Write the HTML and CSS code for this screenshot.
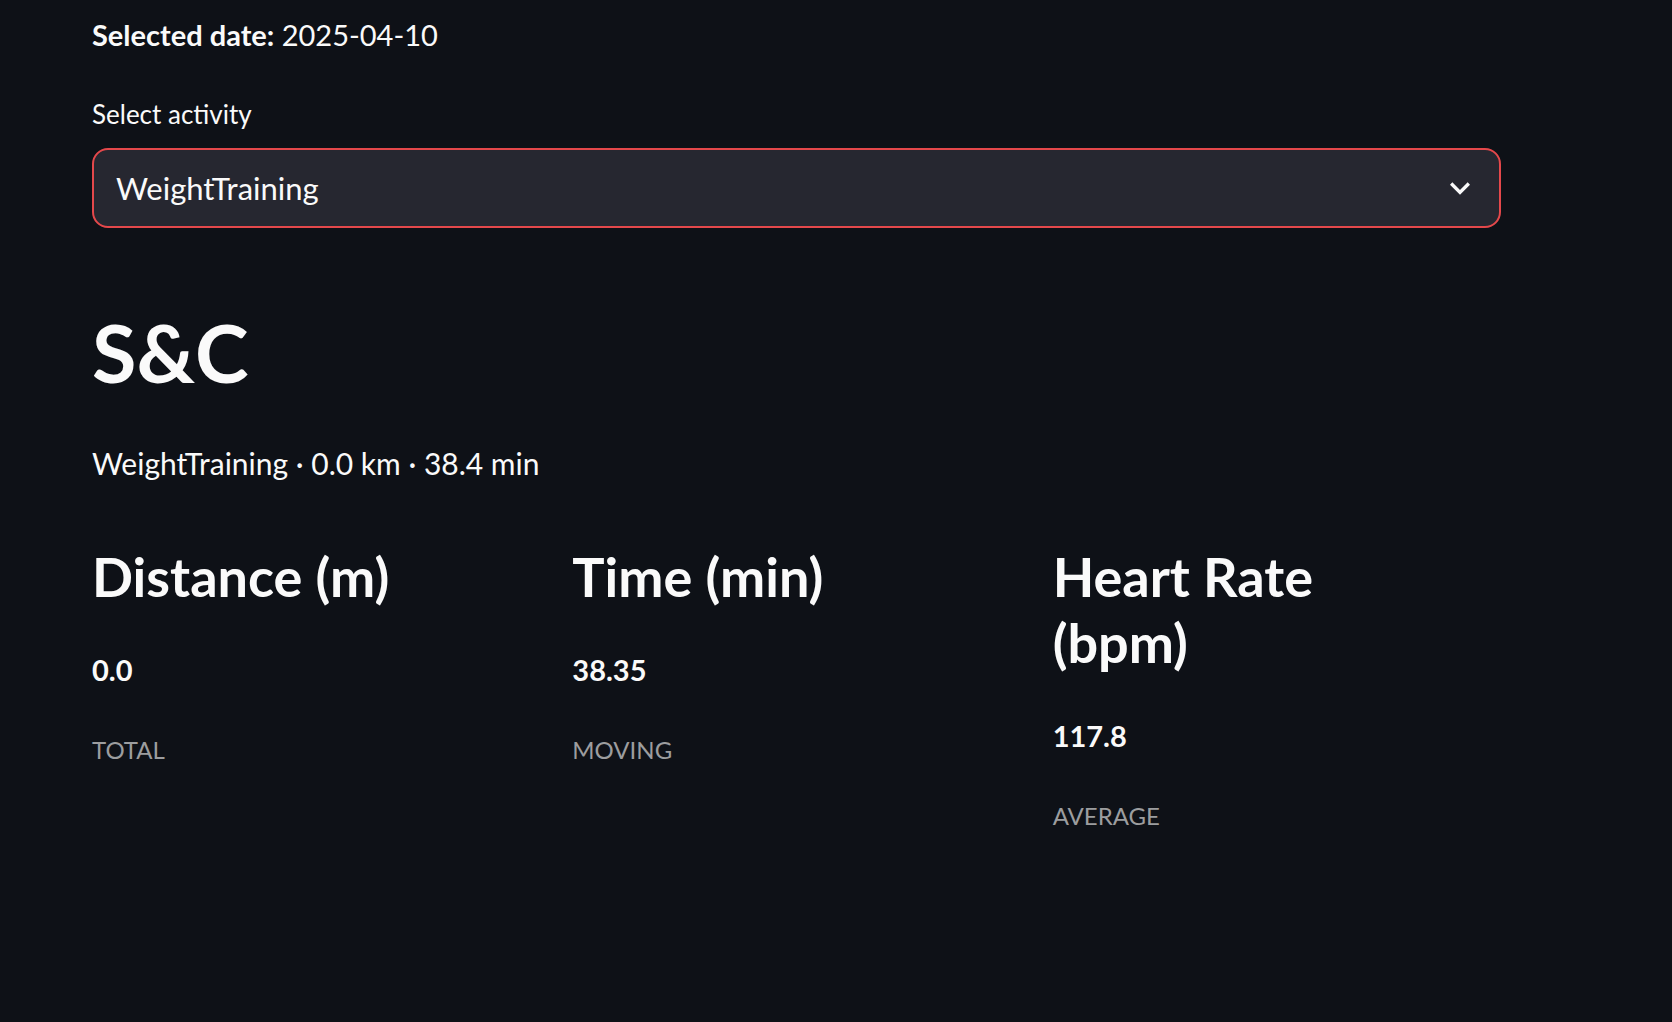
FILE: index.html
```html
<!DOCTYPE html>
<html lang="en">
<head>
<meta charset="utf-8">
<title>Activity</title>
<link rel="stylesheet" href="styles.css">
</head>
<body>
<main class="main">
  <p class="date"><strong>Selected date:</strong> 2025-04-10</p>

  <div class="field">
    <label class="field-label">Select activity</label>
    <div class="select">
      <span class="select-value">WeightTraining</span>
      <svg class="chevron" viewBox="0 0 24 24" width="40" height="40" aria-hidden="true">
        <path d="M16.59 8.59L12 13.17 7.41 8.59 6 10l6 6 6-6z" fill="#fafafa"/>
      </svg>
    </div>
  </div>

  <h1 class="title">S&amp;C</h1>
  <p class="subtitle">WeightTraining · 0.0 km · 38.4 min</p>

  <section class="metrics">
    <div class="metric">
      <h3 class="metric-title">Distance (m)</h3>
      <p class="metric-value">0.0</p>
      <p class="metric-caption">TOTAL</p>
    </div>
    <div class="metric">
      <h3 class="metric-title">Time (min)</h3>
      <p class="metric-value">38.35</p>
      <p class="metric-caption">MOVING</p>
    </div>
    <div class="metric">
      <h3 class="metric-title">Heart Rate<br>(bpm)</h3>
      <p class="metric-value">117.8</p>
      <p class="metric-caption">AVERAGE</p>
    </div>
  </section>
</main>
</body>
</html>
```
FILE: styles.css
```css
html, body {
  margin: 0;
  padding: 0;
  background: #0e1117;
  color: #fafafa;
  font-family: "Lato", "Noto Sans", sans-serif;
}

.main {
  width: 1409px;
  padding: 15px 0 0 92px;
}

p, h1, h3 {
  margin: 0;
}

.date {
  font-size: 29px;
  line-height: 40px;
}

.date strong {
  font-weight: 700;
}

.field {
  margin-top: 43px;
}

.field-label {
  display: block;
  font-size: 26px;
  line-height: 32px;
  margin-bottom: 18px;
}

.select {
  box-sizing: border-box;
  height: 80px;
  display: flex;
  align-items: center;
  justify-content: space-between;
  background: #262730;
  border: 2px solid #e4484b;
  border-radius: 16px;
  padding: 0 19px 0 22px;
}

.select-value {
  font-size: 31px;
  line-height: 40px;
}

.chevron {
  display: block;
  flex: none;
}

.title {
  margin-top: 76px;
  font-size: 81px;
  line-height: 96px;
  font-weight: 700;
}

.subtitle {
  margin-top: 43px;
  font-size: 30px;
  line-height: 40px;
}

.metrics {
  margin-top: 61px;
  display: grid;
  grid-template-columns: repeat(3, 1fr);
  column-gap: 32px;
}

.metric-title {
  font-size: 54px;
  line-height: 66px;
  font-weight: 700;
}

.metric-value {
  margin-top: 40px;
  font-size: 29px;
  line-height: 40px;
  font-weight: 700;
}

.metric-caption {
  margin-top: 44px;
  font-size: 24px;
  line-height: 32px;
  color: #9c9d9f;
}
```
